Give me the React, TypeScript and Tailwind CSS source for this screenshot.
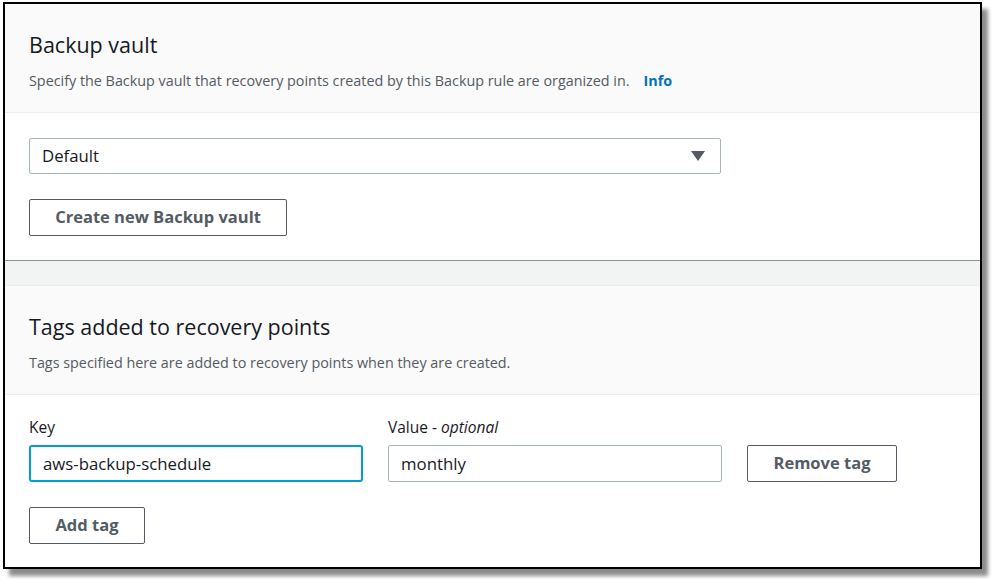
const font = { fontFamily: '"Open Sans", "Noto Sans", Arial, sans-serif' };

const SectionHeader = ({ title, children }: { title: string; children: React.ReactNode }) => (
  <div className="h-[109px] bg-[#fafafa] border-b border-[#eaeded] pl-6 pt-[27px]">
    <h2 className="text-[21.5px] leading-[28px] text-[#16191f]">{title}</h2>
    <p className="mt-[12px] text-[14.35px] leading-[20px] text-[#545b64]">{children}</p>
  </div>
);

const Button = ({ label, className }: { label: string; className: string }) => (
  <button
    className={`h-[37px] border border-[#545b64] rounded-[2px] bg-white text-[16.5px] font-bold text-[#545b64] ${className}`}
  >
    {label}
  </button>
);

export default function App() {
  return (
    <div className="w-[993px] h-[579px] bg-white pt-[2px] pl-[3px]" style={font}>
      <div className="w-[979px] h-[567px] border-2 border-black bg-white shadow-[6px_7px_4px_rgba(0,0,0,0.45)] overflow-hidden">
        <SectionHeader title="Backup vault">
          Specify the Backup vault that recovery points created by this Backup rule are organized in.
          <span className="ml-[14px] font-bold text-[#0073bb]">Info</span>
        </SectionHeader>

        <div className="pl-6 pt-[25px] pb-[24px]">
          <div className="w-[692px] h-[36px] border border-[#aab7b8] rounded-[2px] flex items-center justify-between pl-[12px] pr-[15px]">
            <span className="text-[16.8px] text-[#16191f]">Default</span>
            <svg width="14" height="10" viewBox="0 0 14 10">
              <path d="M0 0 H14 L7 10 Z" fill="#545b64" />
            </svg>
          </div>
          <Button label="Create new Backup vault" className="mt-[25px] w-[258px]" />
        </div>

        <div className="h-[26px] bg-[#f2f3f3] border-t border-[#879596] border-b border-b-[#eaeded]" />

        <SectionHeader title="Tags added to recovery points">
          Tags specified here are added to recovery points when they are created.
        </SectionHeader>

        <div className="pl-6 pt-[22px] flex flex-col items-start">
          <div className="flex items-end">
            <div className="w-[334px]">
              <div className="text-[15.5px] leading-[20px] text-[#16191f] mb-[8px]">Key</div>
              <div className="h-[37px] border-2 border-[#00a1c9] rounded-[3px] flex items-center pl-[12px] text-[16.8px] text-[#16191f]">
                aws-backup-schedule
              </div>
            </div>
            <div className="w-[334px] ml-[25px]">
              <div className="text-[15.5px] leading-[20px] text-[#16191f] mb-[8px]">
                Value - <i>optional</i>
              </div>
              <div className="h-[37px] border border-[#aab7b8] rounded-[2px] flex items-center pl-[12px] text-[16.8px] text-[#16191f]">
                monthly
              </div>
            </div>
            <Button label="Remove tag" className="ml-[25px] w-[150px]" />
          </div>
          <Button label="Add tag" className="mt-[25px] w-[116px] h-[36px]" />
        </div>
      </div>
    </div>
  );
}
